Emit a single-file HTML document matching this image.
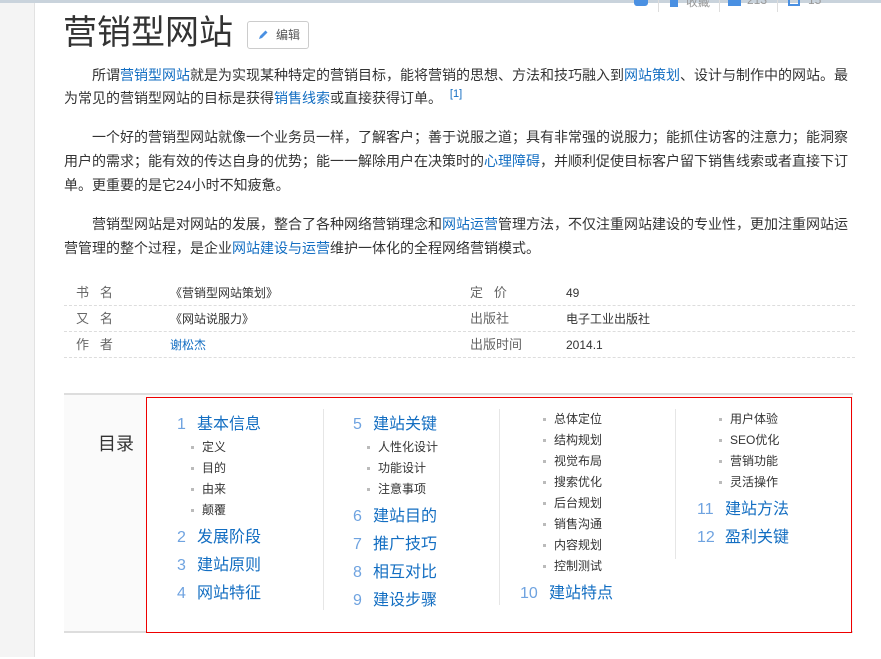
<!DOCTYPE html>
<html><head><meta charset="utf-8"><style>
*{margin:0;padding:0;box-sizing:border-box}
body{width:881px;height:657px;overflow:hidden;background:#fff;font-family:"Liberation Sans","Noto Sans CJK SC",sans-serif;color:#333;position:relative}
.abs{position:absolute;white-space:nowrap}
a{color:#136ec2;text-decoration:none}
.strip{position:absolute;left:0;top:0;width:35px;height:657px;background:#f4f4f4;border-right:1px solid #e2e2e2}
.topbar{position:absolute;left:0;top:0;width:881px;height:3px;background:#c9d3dc}
h1{position:absolute;left:63px;top:11px;font-size:34px;font-weight:normal;color:#333;line-height:44px;letter-spacing:0}
.edit{position:absolute;left:247px;top:21px;width:62px;height:28px;border:1px solid #ccc;border-radius:3px;font-size:12px;color:#555;line-height:26px;padding-left:28px}
.p{position:absolute;left:64px;width:788px;font-size:14px;line-height:24px;text-indent:28px;color:#333}
sup{line-height:0;vertical-align:6px}
.row{position:absolute;left:64px;width:791px;height:26px;border-bottom:1px dashed #ddd;font-size:12px;line-height:26px}
.row span{position:absolute}
.lbl{color:#666;font-size:13px}
.toc{position:absolute;left:64px;top:393px;width:789px;height:240px;background:#fafafa;border-top:2px solid #ddd;border-bottom:2px solid #ddd}
.red{position:absolute;left:146px;top:397px;width:706px;height:236px;border:1px solid #e00;background:#fff}
.l1{position:absolute;font-size:16px;color:#136ec2;white-space:nowrap;line-height:20px}
.l1 b{font-weight:normal;color:#6fa3e0;position:absolute}
.l2{position:absolute;font-size:12px;color:#333;white-space:nowrap;line-height:16px}
.l2:before{content:"";position:absolute;left:-11px;top:7px;width:3px;height:3px;background:#bbb}
.sep{position:absolute;width:1px;background:#e6e6e6}
.tc{position:absolute;left:0;top:2px;width:881px;height:657px}
</style></head><body>
<div class="strip"></div>
<div class="topbar"></div>
<div class="abs" style="left:634px;top:-6px;width:14px;height:12px;background:#4a90e2;border-radius:3px"></div>
<div class="abs" style="left:658px;top:0;width:1px;height:12px;background:#ddd"></div>
<div class="abs" style="left:670px;top:-2px;width:8px;height:9px;background:#4a90e2"></div>
<div class="abs" style="left:686px;top:-7px;font-size:12px;color:#999">收藏</div>
<div class="abs" style="left:719px;top:0;width:1px;height:12px;background:#ddd"></div>
<div class="abs" style="left:728px;top:-2px;width:13px;height:8px;background:#4a90e2"></div>
<div class="abs" style="left:747px;top:-7px;font-size:12px;color:#999">213</div>
<div class="abs" style="left:777px;top:0;width:1px;height:12px;background:#ddd"></div>
<div class="abs" style="left:788px;top:-3px;width:12px;height:9px;border:2px solid #4a90e2;border-top:none"></div>
<div class="abs" style="left:808px;top:-7px;font-size:12px;color:#999">15</div>

<h1>营销型网站</h1>
<div class="edit"><svg style="position:absolute;left:9px;top:7px" width="12" height="12" viewBox="0 0 12 12"><path d="M2 10 L3 7 L8.5 1.5 L10.5 3.5 L5 9 Z" fill="#4a90e2"/></svg>编辑</div>

<div class="p" style="top:64px;line-height:23px">所谓<a>营销型网站</a>就是为实现某种特定的营销目标，能将营销的思想、方法和技巧融入到<a>网站策划</a>、设计与制作中的网站。最为常见的营销型网站的目标是获得<a>销售线索</a>或直接获得订单。 <sup style="font-size:11px;color:#136ec2;margin-left:4px">[1]</sup></div>
<div class="p" style="top:125px">一个好的营销型网站就像一个业务员一样，了解客户；善于说服之道；具有非常强的说服力；能抓住访客的注意力；能洞察用户的需求；能有效的传达自身的优势；能一一解除用户在决策时的<a>心理障碍</a>，并顺利促使目标客户留下销售线索或者直接下订单。更重要的是它24小时不知疲惫。</div>
<div class="p" style="top:212px">营销型网站是对网站的发展，整合了各种网络营销理念和<a>网站运营</a>管理方法，不仅注重网站建设的专业性，更加注重网站运营管理的整个过程，是企业<a>网站建设与运营</a>维护一体化的全程网络营销模式。</div>

<div class="row" style="top:280px"><span class="lbl" style="left:12px">书&nbsp;&nbsp;&nbsp;名</span><span style="left:106px">《营销型网站策划》</span><span class="lbl" style="left:406px">定&nbsp;&nbsp;&nbsp;价</span><span style="left:502px">49</span></div>
<div class="row" style="top:306px"><span class="lbl" style="left:12px">又&nbsp;&nbsp;&nbsp;名</span><span style="left:106px">《网站说服力》</span><span class="lbl" style="left:406px">出版社</span><span style="left:502px">电子工业出版社</span></div>
<div class="row" style="top:332px"><span class="lbl" style="left:12px">作&nbsp;&nbsp;&nbsp;者</span><span style="left:106px"><a>谢松杰</a></span><span class="lbl" style="left:406px">出版时间</span><span style="left:502px">2014.1</span></div>

<div class="toc"></div>
<div class="red"></div>
<div class="tc">
<div class="abs" style="left:98px;top:428px;font-size:18px;color:#333">目录</div>
<div class="sep" style="left:323px;top:407px;height:201px"></div>
<div class="sep" style="left:499px;top:407px;height:196px"></div>
<div class="sep" style="left:675px;top:407px;height:150px"></div>

<div class="l1" style="left:197px;top:413px"><b style="left:-20px">1</b>基本信息</div>
<div class="l2" style="left:202px;top:437px">定义</div>
<div class="l2" style="left:202px;top:458px">目的</div>
<div class="l2" style="left:202px;top:479px">由来</div>
<div class="l2" style="left:202px;top:500px">颠覆</div>
<div class="l1" style="left:197px;top:526px"><b style="left:-20px">2</b>发展阶段</div>
<div class="l1" style="left:197px;top:554px"><b style="left:-20px">3</b>建站原则</div>
<div class="l1" style="left:197px;top:582px"><b style="left:-20px">4</b>网站特征</div>

<div class="l1" style="left:373px;top:413px"><b style="left:-20px">5</b>建站关键</div>
<div class="l2" style="left:378px;top:437px">人性化设计</div>
<div class="l2" style="left:378px;top:458px">功能设计</div>
<div class="l2" style="left:378px;top:479px">注意事项</div>
<div class="l1" style="left:373px;top:505px"><b style="left:-20px">6</b>建站目的</div>
<div class="l1" style="left:373px;top:533px"><b style="left:-20px">7</b>推广技巧</div>
<div class="l1" style="left:373px;top:561px"><b style="left:-20px">8</b>相互对比</div>
<div class="l1" style="left:373px;top:589px"><b style="left:-20px">9</b>建设步骤</div>

<div class="l2" style="left:554px;top:409px">总体定位</div>
<div class="l2" style="left:554px;top:430px">结构规划</div>
<div class="l2" style="left:554px;top:451px">视觉布局</div>
<div class="l2" style="left:554px;top:472px">搜索优化</div>
<div class="l2" style="left:554px;top:493px">后台规划</div>
<div class="l2" style="left:554px;top:514px">销售沟通</div>
<div class="l2" style="left:554px;top:535px">内容规划</div>
<div class="l2" style="left:554px;top:556px">控制测试</div>
<div class="l1" style="left:549px;top:582px"><b style="left:-29px">10</b>建站特点</div>

<div class="l2" style="left:730px;top:409px">用户体验</div>
<div class="l2" style="left:730px;top:430px">SEO优化</div>
<div class="l2" style="left:730px;top:451px">营销功能</div>
<div class="l2" style="left:730px;top:472px">灵活操作</div>
<div class="l1" style="left:725px;top:498px"><b style="left:-28px">11</b>建站方法</div>
<div class="l1" style="left:725px;top:526px"><b style="left:-28px">12</b>盈利关键</div>
</div>
</body></html>
